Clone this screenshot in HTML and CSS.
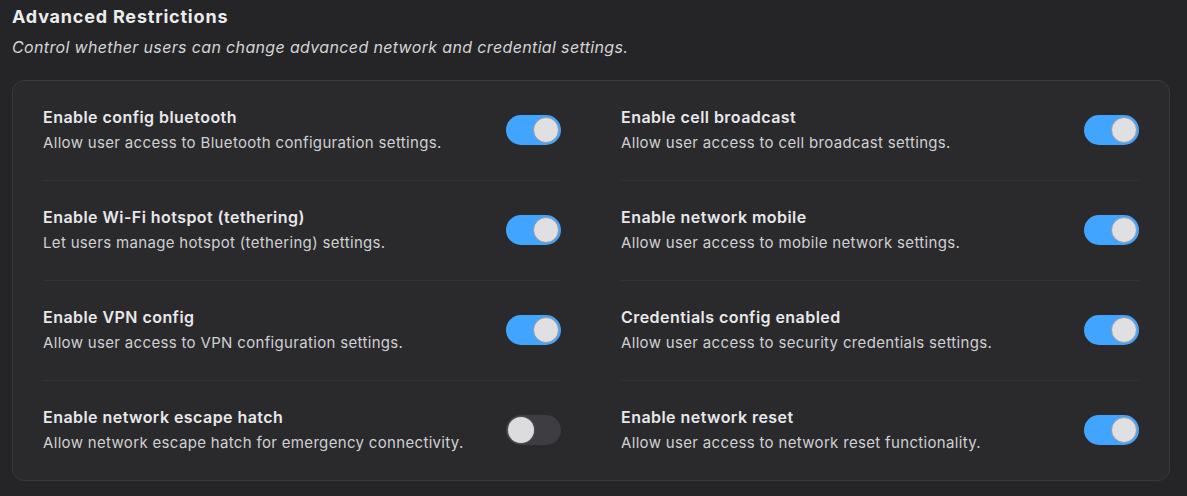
FILE: index.html
```html
<!DOCTYPE html>
<html lang="en">
<head>
<meta charset="utf-8">
<title>Advanced Restrictions</title>
<link rel="stylesheet" href="styles.css">
</head>
<body>
<section class="section">
  <h2 class="section-title">Advanced Restrictions</h2>
  <p class="section-desc">Control whether users can change advanced network and credential settings.</p>
  <div class="card">
    <div class="setting">
      <div class="setting-text">
        <div class="setting-name">Enable config bluetooth</div>
        <div class="setting-help">Allow user access to Bluetooth configuration settings.</div>
      </div>
      <span class="switch on"><span class="knob"></span></span>
    </div>
    <div class="setting">
      <div class="setting-text">
        <div class="setting-name">Enable cell broadcast</div>
        <div class="setting-help">Allow user access to cell broadcast settings.</div>
      </div>
      <span class="switch on"><span class="knob"></span></span>
    </div>
    <div class="setting">
      <div class="setting-text">
        <div class="setting-name">Enable Wi-Fi hotspot (tethering)</div>
        <div class="setting-help">Let users manage hotspot (tethering) settings.</div>
      </div>
      <span class="switch on"><span class="knob"></span></span>
    </div>
    <div class="setting">
      <div class="setting-text">
        <div class="setting-name">Enable network mobile</div>
        <div class="setting-help">Allow user access to mobile network settings.</div>
      </div>
      <span class="switch on"><span class="knob"></span></span>
    </div>
    <div class="setting">
      <div class="setting-text">
        <div class="setting-name">Enable VPN config</div>
        <div class="setting-help">Allow user access to VPN configuration settings.</div>
      </div>
      <span class="switch on"><span class="knob"></span></span>
    </div>
    <div class="setting">
      <div class="setting-text">
        <div class="setting-name">Credentials config enabled</div>
        <div class="setting-help">Allow user access to security credentials settings.</div>
      </div>
      <span class="switch on"><span class="knob"></span></span>
    </div>
    <div class="setting">
      <div class="setting-text">
        <div class="setting-name">Enable network escape hatch</div>
        <div class="setting-help">Allow network escape hatch for emergency connectivity.</div>
      </div>
      <span class="switch off"><span class="knob"></span></span>
    </div>
    <div class="setting">
      <div class="setting-text">
        <div class="setting-name">Enable network reset</div>
        <div class="setting-help">Allow user access to network reset functionality.</div>
      </div>
      <span class="switch on"><span class="knob"></span></span>
    </div>
  </div>
</section>
</body>
</html>
```

FILE: styles.css
```css
html, body {
  margin: 0;
  padding: 0;
  background: #252527;
}

body {
  font-family: Inter, "Noto Sans", sans-serif;
  color: #e6e6e8;
}

.section {
  padding: 5px 17px 0 12px;
}

.section-title {
  margin: 0;
  font-size: 18px;
  line-height: 24px;
  font-weight: 700;
  letter-spacing: 0.8px;
  color: #ececee;
}

.section-desc {
  margin: 8px 0 23px;
  font-size: 16px;
  line-height: 20px;
  font-style: italic;
  letter-spacing: 0.35px;
  color: #d4d4d6;
}

.card {
  display: grid;
  grid-template-columns: 1fr 1fr;
  column-gap: 60px;
  padding: 0 30px;
  background: #2a2a2d;
  border: 1px solid #3a3a3e;
  border-radius: 12px;
}

.setting {
  display: flex;
  align-items: center;
  justify-content: space-between;
  padding: 25px 0 26px;
  border-bottom: 1px solid #333337;
}

.setting:nth-last-child(-n+2) {
  border-bottom: none;
}

.setting-name {
  font-size: 16px;
  line-height: 22px;
  font-weight: 600;
  letter-spacing: 0.45px;
  color: #e8e8ea;
}

.setting-help {
  margin-top: 4px;
  font-size: 15px;
  line-height: 22px;
  letter-spacing: 0.33px;
  color: #d0d0d2;
}

.switch {
  position: relative;
  flex: none;
  width: 55px;
  height: 30px;
  border-radius: 15px;
  box-sizing: border-box;
}

.switch.on {
  background: #41a5ff;
}

.switch.off {
  background: #3d3d42;
}

.knob {
  position: absolute;
  top: 2px;
  width: 26px;
  height: 26px;
  border-radius: 50%;
  box-sizing: border-box;
  background: #e0e0e2;
}

.switch.on .knob {
  right: 2px;
  border: 1px solid #9a9a9e;
}

.switch.off .knob {
  left: 2px;
  background: #dcdcde;
  box-shadow: 0 0 2px rgba(255, 255, 255, 0.35);
}
```
